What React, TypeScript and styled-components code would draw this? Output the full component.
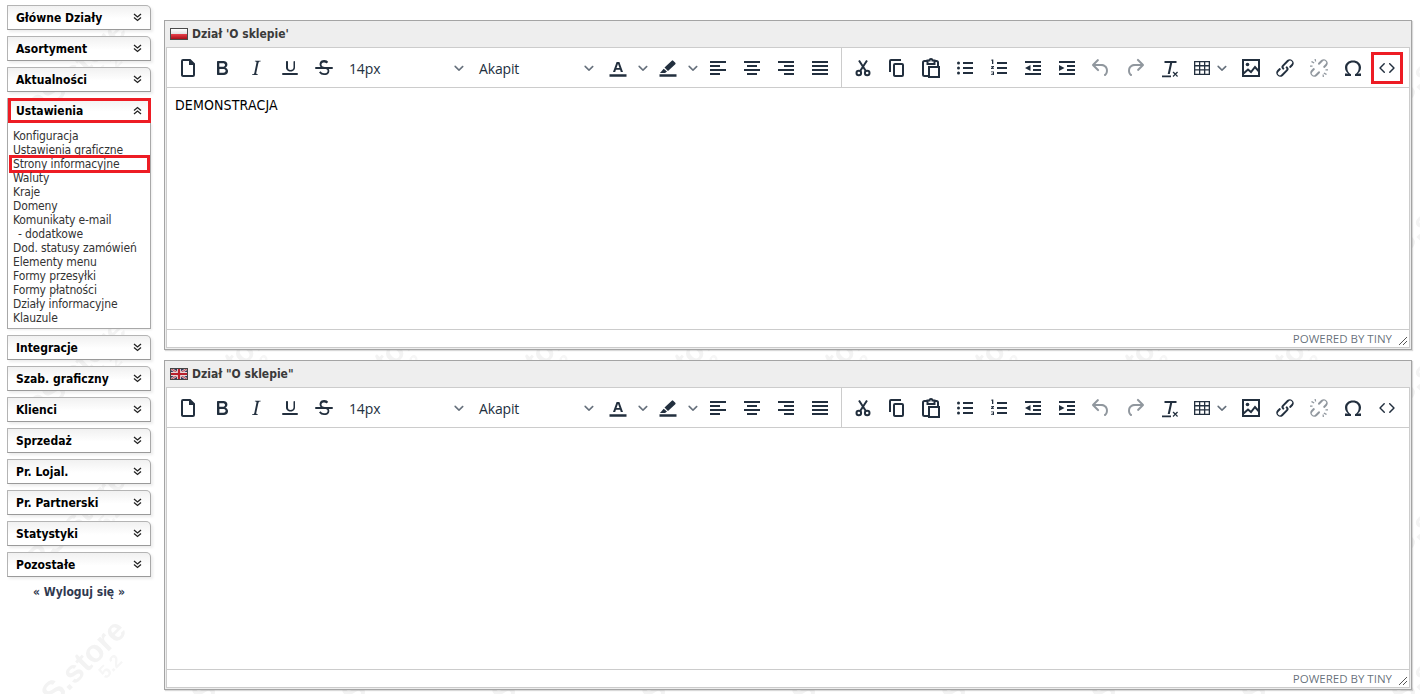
import React from "react";
import styled, { createGlobalStyle } from "styled-components";

const GlobalStyle = createGlobalStyle`
  html, body {
    margin: 0;
    padding: 0;
    background: #fff;
  }
  body {
    font-family: "DejaVu Sans Condensed", "DejaVu Sans", sans-serif;
    font-size: 12px;
    color: #000;
  }
`;

const Page = styled.div`
  position: relative;
  width: 1420px;
  height: 694px;
  overflow: hidden;
  display: flex;
  align-items: flex-start;
  padding: 5px 8px 0 7px;
  box-sizing: border-box;
  gap: 13px;
`;

const WatermarkLayer = styled.svg`
  position: absolute;
  left: 0;
  top: 0;
  width: 1420px;
  height: 694px;
  pointer-events: none;
`;

const Sidebar = styled.nav`
  position: relative;
  width: 144px;
  flex-shrink: 0;
  display: flex;
  flex-direction: column;
`;

const MenuHeader = styled.div<{ $marked?: boolean }>`
  position: relative;
  height: 23px;
  padding-left: 8px;
  padding-right: 8px;
  display: flex;
  align-items: center;
  justify-content: space-between;
  border: 1px solid #b4b4b4;
  border-bottom-color: #9a9a9a;
  border-right-color: #a8a8a8;
  border-radius: 1px 5px 0 0;
  background: linear-gradient(180deg, #f1f1f1 0%, #fff 55%);
  box-shadow: 2px 2px 3px rgba(0, 0, 0, 0.08);
  margin-bottom: 6px;
  font-weight: bold;
  font-size: 12px;
  ${(p) =>
    p.$marked &&
    `margin-bottom: 0;
    box-shadow: none;
    &::after {
      content: "";
      position: absolute;
      inset: -1px -1px -1px 0;
      border: 3px solid #ed1c24;
    }`}
`;

const Chevrons = styled.svg`
  width: 9px;
  height: 9px;
  fill: none;
  stroke: #222;
  stroke-width: 1.3;
`;

const Submenu = styled.div`
  border: 1px solid #a8a8a8;
  border-top: none;
  background: #fff;
  padding: 6px 0 4px;
  margin-bottom: 6px;
  height: 195px;
  box-shadow: 1px 1px 2px rgba(0, 0, 0, 0.08);
`;

const SubLink = styled.div<{ $marked?: boolean; $indent?: boolean }>`
  position: relative;
  line-height: 14px;
  height: 14px;
  padding-left: ${(p) => (p.$indent ? "10px" : "5px")};
  color: #333;
  letter-spacing: -0.13px;
  white-space: nowrap;
  ${(p) =>
    p.$marked &&
    `&::after {
      content: "";
      position: absolute;
      left: 1px;
      right: 0;
      top: -2px;
      bottom: -2px;
      border: 3px solid #ed1c24;
      box-sizing: border-box;
    }`}
`;

const Logout = styled.div`
  text-align: center;
  font-weight: bold;
  color: #30394f;
  margin-top: 2px;
`;

const Main = styled.main`
  position: relative;
  flex: 1;
  display: flex;
  flex-direction: column;
  gap: 10px;
  padding-top: 15px;
`;

const Panel = styled.section`
  height: 330px;
  box-sizing: border-box;
  border: 1px solid #a4a4a4;
  background: #eee;
  display: flex;
  flex-direction: column;
  box-shadow: 1px 1px 1px rgba(0, 0, 0, 0.15);
`;

const PanelTitle = styled.div`
  height: 26px;
  flex-shrink: 0;
  display: flex;
  align-items: center;
  gap: 4px;
  padding-left: 5px;
  font-weight: bold;
  color: #3a3a3a;
`;

const Flag = styled.svg`
  width: 18px;
  height: 12px;
  display: block;
`;

const Editor = styled.div`
  flex: 1;
  margin: 0 1px 1px 1px;
  border: 1px solid #ccc;
  background: #fff;
  display: flex;
  flex-direction: column;
  min-height: 0;
`;

const Toolbar = styled.div`
  height: 39px;
  flex-shrink: 0;
  display: flex;
  align-items: center;
  border-bottom: 1px solid #ccc;
`;

const Group = styled.div<{ $sep?: boolean }>`
  height: 100%;
  display: flex;
  align-items: center;
  padding: 0 4px;
  ${(p) => p.$sep && "border-right: 1px solid #ccc;"}
`;

const Btn = styled.button<{ $w?: number; $off?: boolean; $marked?: boolean }>`
  width: ${(p) => p.$w ?? 34}px;
  height: 34px;
  padding: 0;
  margin: 0;
  border: 0;
  background: none;
  display: flex;
  align-items: center;
  justify-content: center;
  flex-shrink: 0;
  color: ${(p) => (p.$off ? "rgba(34, 47, 62, 0.5)" : "#222f3e")};
  svg {
    width: 24px;
    height: 24px;
    fill: currentColor;
    display: block;
  }
  .line {
    fill: none;
    stroke: currentColor;
    stroke-width: 2;
  }
  ${(p) => p.$marked && "outline: 3px solid #ed1c24; outline-offset: -4px;"}
`;

const Caret = styled.span`
  width: 16px;
  height: 34px;
  flex-shrink: 0;
  display: flex;
  align-items: center;
  justify-content: center;
  svg {
    width: 10px;
    height: 10px;
    fill: #66707c;
    display: block;
  }
`;

const TableCaret = styled(Caret)`
  margin: 0 4px 0 -4px;
`;

const Select = styled.div`
  width: 130px;
  height: 34px;
  flex-shrink: 0;
  box-sizing: border-box;
  padding: 1px 4px 0 8px;
  display: flex;
  align-items: center;
  justify-content: space-between;
  font-family: "Open Sans", sans-serif;
  font-size: 14px;
  letter-spacing: -0.15px;
  color: #222f3e;
`;

const Body = styled.div`
  flex: 1;
  padding: 9px 8px;
  font-size: 14px;
  letter-spacing: 0.15px;
  line-height: 16px;
  color: #000;
`;

const Status = styled.div`
  position: relative;
  height: 18px;
  box-sizing: border-box;
  flex-shrink: 0;
  border-top: 1px solid #ccc;
  display: flex;
  align-items: center;
  justify-content: flex-end;
  padding-right: 17px;
  font-family: "Open Sans", sans-serif;
  font-size: 11.5px;
  color: rgba(34, 47, 62, 0.7);
`;

const Grip = styled.svg`
  position: absolute;
  right: 1px;
  bottom: 1px;
  width: 10px;
  height: 10px;
  stroke: #555;
  stroke-width: 1;
`;

const caretIcon = (
  <svg viewBox="0 0 10 10">
    <path d="M.6 2.8a.8.8 0 0 1 1.1 0L5 6l3.3-3.2a.8.8 0 0 1 1.1 1.1L5.5 7.7a.7.7 0 0 1-1 0L.6 3.9a.8.8 0 0 1 0-1.1z" />
  </svg>
);

const lines = (rows: [number, number, number][]) => (
  <svg viewBox="0 0 24 24">
    {rows.map(([x, y, w], i) => (
      <rect key={i} x={x} y={y} width={w} height={2} />
    ))}
  </svg>
);

const icons: Record<string, React.ReactNode> = {
  doc: (
    <svg viewBox="0 0 24 24">
      <path d="M14.4 3H7a2 2 0 0 0-2 2v14c0 1.1.9 2 2 2h10a2 2 0 0 0 2-2V7.6L14.4 3zM17 19H7V5h6v4h4v10z" />
    </svg>
  ),
  bold: (
    <svg viewBox="0 0 24 24">
      <path d="M7.8 19c-.3 0-.5 0-.6-.2l-.2-.5V5.7c0-.2 0-.4.2-.5l.6-.2h5c1.5 0 2.7.3 3.5 1 .7.6 1.1 1.4 1.1 2.5a3 3 0 0 1-.6 1.9c-.4.6-1 1-1.6 1.2.4.1.9.3 1.3.6s.8.7 1 1.2c.4.4.5 1 .5 1.6 0 1.3-.4 2.3-1.3 3-.8.7-2.1 1-3.8 1H7.8zm5-8.3c.6 0 1.2-.1 1.6-.5.4-.3.6-.7.6-1.3 0-1.1-.8-1.7-2.3-1.7H9.3v3.5h3.4zm.5 6c.7 0 1.3-.1 1.7-.4.4-.4.6-.9.6-1.5s-.2-1-.7-1.4c-.4-.3-1-.4-2-.4H9.4v3.8h4z" />
    </svg>
  ),
  italic: (
    <svg viewBox="0 0 24 24">
      <path d="M16.7 4.7l-.1.9h-.3c-.6 0-1 0-1.4.3-.3.3-.4.6-.5 1.1l-2.1 9.8v.6c0 .5.4.8 1.4.8h.2l-.2.8H8l.2-.8h.2c1.1 0 1.8-.5 2-1.5l2-9.8.1-.5c0-.6-.4-.8-1.4-.8h-.3l.2-.9h5.8z" />
    </svg>
  ),
  underline: (
    <svg viewBox="0 0 24 24">
      <path d="M16 5c.6 0 1 .4 1 1v5.500a4 4 0 0 1-.4 1.800l-.5.700a4 4 0 0 1-1.300 1 5.400 5.400 0 0 1-4.600 0 4 4 0 0 1-1.300-1l-.5-.7a4 4 0 0 1-.4-1.800V6c0-.6.4-1 1-1s1 .4 1 1v5.500c0 1.700 1 2.500 2.500 2.500s3-.8 3-2.500V6c0-.6.4-1 1-1zM5 17h14a1 1 0 0 1 0 2H5a1 1 0 0 1 0-2z" />
    </svg>
  ),
  strike: (
    <svg viewBox="0 0 24 24">
      <path d="M15.6 8.5c-.5-.7-1-1.1-1.3-1.3-.6-.4-1.3-.6-2-.6-2.7 0-2.8 1.7-2.8 2.1 0 1.6 1.8 2 3.2 2.3 4.4.9 4.6 2.8 4.6 3.9 0 1.4-.7 4.1-5 4.1A6.2 6.2 0 0 1 7 16.4l1.5-1.1c.4.6 1.6 2 3.7 2 1.6 0 2.5-.4 3-1 .3-.4.4-.9.4-1.5 0-1.6-2-2-3.5-2.3-2.4-.5-4.5-1.4-4.5-4 0-1.2.5-4.4 4.5-4.4 2.2 0 3.4 1 4.1 1.9l-1.5 1.2-.1.3zM4 11h16a1 1 0 0 1 0 2H4a1 1 0 0 1 0-2z" />
    </svg>
  ),
  textColor: (
    <svg viewBox="0 0 24 24">
      <path d="M3.500 18.300h17v2.500h-17zM10.600 6h2.800l3.600 10h-2.200l-.7-2.200H9.900L9.200 16H7l3.600-10zm-.1 6.100h3L12 7.800l-1.500 4.300z" />
    </svg>
  ),
  highlight: (
    <svg viewBox="0 0 24 24">
      <path d="M3.500 18.300h17v2.500h-17zM19.300 6.800l-2.100-2.100a1 1 0 0 0-1.400 0L8.500 11.600l3.500 3.500 7.300-6.900a1 1 0 0 0 0-1.400zM7.700 12.700L4 17h5l2-1.500-3.300-2.800z" />
    </svg>
  ),
  alignLeft: lines([[4, 5, 16], [4, 9, 10], [4, 13, 16], [4, 17, 10]]),
  alignCenter: lines([[4, 5, 16], [7, 9, 10], [4, 13, 16], [7, 17, 10]]),
  alignRight: lines([[4, 5, 16], [10, 9, 10], [4, 13, 16], [10, 17, 10]]),
  justify: lines([[4, 5, 16], [4, 9, 16], [4, 13, 16], [4, 17, 16]]),
  cut: (
    <svg viewBox="0 0 24 24">
      <circle className="line" cx="7.800" cy="17" r="2.300" />
      <circle className="line" cx="16.200" cy="17" r="2.300" />
      <path className="line" d="M9 15.200L16 4.500M15 15.200L8 4.500" />
    </svg>
  ),
  copy: (
    <svg viewBox="0 0 24 24">
      <path d="M16 3H6a2 2 0 0 0-2 2v11h2V5h10V3zm1 4H10a2 2 0 0 0-2 2v10c0 1.100.9 2 2 2h7a2 2 0 0 0 2-2V9a2 2 0 0 0-2-2zm0 12h-7V9h7v10z" />
    </svg>
  ),
  paste: (
    <svg viewBox="0 0 24 24">
      <path
        className="line"
        d="M8.500 5H5.500A1.500 1.500 0 0 0 4 6.500v12A1.500 1.500 0 0 0 5.500 20H9M15.500 5h2A1.500 1.500 0 0 1 19 6.500V10M8.500 8V4.500h2a1.500 1.500 0 0 1 3 0h2V8zM10 11h10v10H10z"
      />
    </svg>
  ),
  bullist: (
    <svg viewBox="0 0 24 24">
      <path d="M10 6h10v2H10V6zm0 5h10v2H10v-2zm0 5h10v2H10v-2z" />
      <circle cx="5.500" cy="7" r="1.500" />
      <circle cx="5.500" cy="12" r="1.500" />
      <circle cx="5.500" cy="17" r="1.500" />
    </svg>
  ),
  numlist: (
    <svg viewBox="0 0 24 24">
      <path d="M10 6h10v2H10V6zm0 5h10v2H10v-2zm0 5h10v2H10v-2z" />
      <path d="M5 3.500h1.300V8H5V4.600H4V3.900l1-.4zM4 10h3v1l-1.600 1.300H7V13H4v-.9l1.700-1.400H4V10zM4 15.500h3v3.500H4v-.8h2v-.6H4.700v-.6H6v-.7H4v-.8z" />
    </svg>
  ),
  outdent: (
    <svg viewBox="0 0 24 24">
      <path d="M4 5h16v2H4V5zm8 4h8v2h-8V9zm0 4h8v2h-8v-2zM4 17h16v2H4v-2zM9.500 9v6L4 12l5.500-3z" />
    </svg>
  ),
  indent: (
    <svg viewBox="0 0 24 24">
      <path d="M4 5h16v2H4V5zm8 4h8v2h-8V9zm0 4h8v2h-8v-2zM4 17h16v2H4v-2zM4 9v6l5.500-3L4 9z" />
    </svg>
  ),
  undo: (
    <svg viewBox="0 0 24 24">
      <path d="M6.400 8H12c3.700 0 6.200 2 6.800 5.100.6 2.700-.4 5.600-2.300 6.800a1 1 0 0 1-1-1.800c1.100-.6 1.800-2.700 1.400-4.600-.5-2.100-2.100-3.500-4.900-3.500H6.400l3.300 3.300a1 1 0 1 1-1.400 1.400l-5-5a1 1 0 0 1 0-1.400l5-5a1 1 0 0 1 1.400 1.400L6.400 8z" />
    </svg>
  ),
  redo: (
    <svg viewBox="0 0 24 24">
      <path d="M17.600 10H12c-2.800 0-4.400 1.400-4.900 3.500-.4 2 .3 4 1.400 4.600a1 1 0 1 1-1 1.800c-2-1.200-2.900-4.100-2.300-6.800.6-3 3.100-5.100 6.800-5.100h5.600l-3.300-3.300a1 1 0 1 1 1.400-1.400l5 5a1 1 0 0 1 0 1.400l-5 5a1 1 0 0 1-1.400-1.400l3.300-3.300z" />
    </svg>
  ),
  clear: (
    <svg viewBox="0 0 24 24">
      <path d="M7.500 5h12v2h-4.300l-2.400 11h-2.100l2.400-11H7.500V5zM5 19.500h9v1.700H5zM16.500 15.500l1.800 1.800 1.800-1.800.9.900-1.800 1.800 1.800 1.800-.9.900-1.800-1.800-1.800 1.800-.9-.9 1.800-1.800-1.800-1.800.9-.9z" />
    </svg>
  ),
  table: (
    <svg viewBox="0 0 24 24">
      <path d="M4 5h16v14H4V5zm1.300 1.300v2.800h3.700V6.300H5.300zm5 0v2.800h3.700V6.300h-3.700zm5 0v2.800h3.400V6.300h-3.400zM5.300 10.400v2.800h3.700v-2.800H5.300zm5 0v2.800h3.700v-2.800h-3.700zm5 0v2.800h3.400v-2.800h-3.400zM5.300 14.500v3.200h3.700v-3.200H5.300zm5 0v3.200h3.700v-3.200h-3.700zm5 0v3.200h3.400v-3.200h-3.400z" />
    </svg>
  ),
  image: (
    <svg viewBox="0 0 24 24">
      <path className="line" d="M4 4h16v16H4z" />
      <circle cx="8.500" cy="8.500" r="1.800" />
      <path className="line" d="M4.500 17.500l4.500-4 3 2.500 4-5 4 4.500" />
    </svg>
  ),
  link: (
    <svg viewBox="0 0 24 24">
      <path d="M6.200 12.300a1 1 0 0 1 1.400 1.400l-2 2a2 2 0 1 0 2.800 2.800l4.800-4.800a1 1 0 0 0 0-1.400 1 1 0 1 1 1.400-1.300 2.900 2.900 0 0 1 0 4.100l-4.800 4.800a4 4 0 0 1-5.600-5.600l2-2zm11.600-.6a1 1 0 0 1-1.400-1.400l2-2a2 2 0 1 0-2.800-2.800l-4.800 4.800a1 1 0 0 0 0 1.400 1 1 0 1 1-1.400 1.300 2.900 2.900 0 0 1 0-4.100l4.800-4.800a4 4 0 0 1 5.600 5.600l-2 2z" />
    </svg>
  ),
  unlink: (
    <svg viewBox="0 0 24 24">
      <path d="M6.200 12.300a1 1 0 0 1 1.400 1.400l-2 2a2 2 0 1 0 2.800 2.800l3-3a1 1 0 0 1 1.400 1.400l-3 3a4 4 0 0 1-5.600-5.600l2-2zm11.600-.6a1 1 0 0 1-1.400-1.400l2-2a2 2 0 1 0-2.800-2.800l-3 3a1 1 0 0 1-1.400-1.400l3-3a4 4 0 0 1 5.600 5.600l-2 2zM4 6l1-1 2.500 1.500-.7 1L4 6zm16 12l-1 1-2.500-1.500.7-1L20 18zM7.500 3h1.300l.4 2.500H8L7.500 3zm8 15.500h1.200L17 21h-1.300l-.2-2.500zM3 9.500h2.500v1.200H3V9.500zm15.500 3.800H21v1.200h-2.500v-1.200z" />
    </svg>
  ),
  omega: (
    <svg viewBox="0 0 24 24">
      <path d="M12 4.500c4.500 0 8 2.700 8 7 0 2.800-1.400 4.800-3.300 6H20V20h-6v-1.800c2.300-1 3.700-3.500 3.700-6.500 0-3.100-2.400-5.200-5.700-5.200s-5.700 2.100-5.700 5.200c0 3 1.400 5.500 3.700 6.500V20H4v-2.500h3.300C5.400 16.300 4 14.300 4 11.500c0-4.300 3.500-7 8-7z" />
    </svg>
  ),
  code: (
    <svg viewBox="0 0 24 24">
      <path d="M9.800 15.700c.3.300.3.800 0 1-.3.300-.8.300-1 0l-4.300-4.200a.8.800 0 0 1 0-1l4.200-4.200c.3-.3.800-.3 1 0 .3.200.3.700 0 1L6 12l3.800 3.700zm4.400 0L18 12l-3.800-3.700a.7.700 0 0 1 0-1c.3-.3.800-.3 1 0l4.300 4.200c.3.300.3.800 0 1l-4.200 4.200c-.3.300-.8.300-1 0a.7.700 0 0 1 0-1z" />
    </svg>
  ),
};

const PolishFlag = () => (
  <Flag viewBox="0 0 18 12">
    <defs>
      <linearGradient id="plw" x1="0" y1="0" x2="0" y2="1">
        <stop offset="0" stopColor="#fff" />
        <stop offset="1" stopColor="#e0e0e0" />
      </linearGradient>
      <linearGradient id="plr" x1="0" y1="0" x2="0" y2="1">
        <stop offset="0" stopColor="#e8404a" />
        <stop offset="1" stopColor="#a80f18" />
      </linearGradient>
    </defs>
    <rect width="18" height="12" fill="#4a4a4a" />
    <rect x="1" y="1" width="16" height="5" fill="url(#plw)" />
    <rect x="1" y="6" width="16" height="5" fill="url(#plr)" />
  </Flag>
);

const BritishFlag = () => (
  <Flag viewBox="0 0 18 12">
    <rect width="18" height="12" fill="#333a5e" />
    <path d="M0 0l18 12M18 0L0 12" stroke="#e0c4c8" strokeWidth="2.400" />
    <path d="M0 0l18 12M18 0L0 12" stroke="#b03038" strokeWidth="0.800" />
    <path d="M9 0v12M0 6h18" stroke="#e6d8d8" strokeWidth="4" />
    <path d="M9 0v12M0 6h18" stroke="#b8202c" strokeWidth="2.200" />
    <rect x="0.500" y="0.500" width="17" height="11" fill="none" stroke="#444" />
  </Flag>
);

const EditorPanel: React.FC<{ title: string; flag: React.ReactNode; body?: string; markCode?: boolean }> = ({
  title,
  flag,
  body,
  markCode,
}) => (
  <Panel>
    <PanelTitle>
      {flag}
      {title}
    </PanelTitle>
    <Editor>
      <Toolbar>
        <Group $sep>
          <Btn>{icons.doc}</Btn>
          <Btn>{icons.bold}</Btn>
          <Btn>{icons.italic}</Btn>
          <Btn>{icons.underline}</Btn>
          <Btn>{icons.strike}</Btn>
          <Select>
            14px
            <Caret>{caretIcon}</Caret>
          </Select>
          <Select>
            Akapit
            <Caret>{caretIcon}</Caret>
          </Select>
          <Btn>{icons.textColor}</Btn>
          <Caret>{caretIcon}</Caret>
          <Btn>{icons.highlight}</Btn>
          <Caret>{caretIcon}</Caret>
          <Btn>{icons.alignLeft}</Btn>
          <Btn>{icons.alignCenter}</Btn>
          <Btn>{icons.alignRight}</Btn>
          <Btn>{icons.justify}</Btn>
        </Group>
        <Group>
          <Btn>{icons.cut}</Btn>
          <Btn>{icons.copy}</Btn>
          <Btn>{icons.paste}</Btn>
          <Btn>{icons.bullist}</Btn>
          <Btn>{icons.numlist}</Btn>
          <Btn>{icons.outdent}</Btn>
          <Btn>{icons.indent}</Btn>
          <Btn $off>{icons.undo}</Btn>
          <Btn $off>{icons.redo}</Btn>
          <Btn>{icons.clear}</Btn>
          <Btn $w={32}>{icons.table}</Btn>
          <TableCaret>{caretIcon}</TableCaret>
          <Btn>{icons.image}</Btn>
          <Btn>{icons.link}</Btn>
          <Btn $off>{icons.unlink}</Btn>
          <Btn>{icons.omega}</Btn>
          <Btn $marked={markCode}>{icons.code}</Btn>
        </Group>
      </Toolbar>
      <Body>{body}</Body>
      <Status>
        POWERED BY TINY
        <Grip viewBox="0 0 10 10">
          <path d="M1 9l8-8M5 9l4-4" />
        </Grip>
      </Status>
    </Editor>
  </Panel>
);

const down = (
  <Chevrons viewBox="0 0 9 9">
    <path d="M1 1l3.500 3L8 1M1 4.500l3.500 3L8 4.500" />
  </Chevrons>
);
const up = (
  <Chevrons viewBox="0 0 9 9">
    <path d="M1 4.500l3.500-3L8 4.500M1 8l3.500-3L8 8" />
  </Chevrons>
);

const subLinks = [
  "Konfiguracja",
  "Ustawienia graficzne",
  "Strony informacyjne",
  "Waluty",
  "Kraje",
  "Domeny",
  "Komunikaty e-mail",
  "- dodatkowe",
  "Dod. statusy zamówień",
  "Elementy menu",
  "Formy przesyłki",
  "Formy płatności",
  "Działy informacyjne",
  "Klauzule",
];

const topMenu = ["Główne Działy", "Asortyment", "Aktualności"];
const bottomMenu = ["Integracje", "Szab. graficzny", "Klienci", "Sprzedaż", "Pr. Lojal.", "Pr. Partnerski", "Statystyki", "Pozostałe"];

export default function App() {
  return (
    <>
      <GlobalStyle />
      <Page>
        <WatermarkLayer aria-hidden="true">
          <defs>
            <pattern id="ps-mark" width="150" height="150" patternUnits="userSpaceOnUse">
              <g transform="rotate(-45 75 75)" fontFamily="Liberation Sans, sans-serif" fontWeight="bold" textAnchor="middle">
                <text x="80" y="82" fontSize="31" fill="#f3f3f3">
                  PS.store
                </text>
                <text x="106" y="100" fontSize="18" fill="#f6f6f6">
                  5.2
                </text>
              </g>
            </pattern>
          </defs>
          <rect width="1420" height="694" fill="url(#ps-mark)" />
        </WatermarkLayer>
        <Sidebar>
          {topMenu.map((m) => (
            <MenuHeader key={m}>
              {m}
              {down}
            </MenuHeader>
          ))}
          <MenuHeader $marked>
            Ustawienia
            {up}
          </MenuHeader>
          <Submenu>
            {subLinks.map((s) => (
              <SubLink key={s} $marked={s === "Strony informacyjne"} $indent={s.startsWith("-")}>
                {s}
              </SubLink>
            ))}
          </Submenu>
          {bottomMenu.map((m) => (
            <MenuHeader key={m}>
              {m}
              {down}
            </MenuHeader>
          ))}
          <Logout>« Wyloguj się »</Logout>
        </Sidebar>
        <Main>
          <EditorPanel title="Dział 'O sklepie'" flag={<PolishFlag />} body="DEMONSTRACJA" markCode />
          <EditorPanel title={'Dział "O sklepie"'} flag={<BritishFlag />} />
        </Main>
      </Page>
    </>
  );
}
